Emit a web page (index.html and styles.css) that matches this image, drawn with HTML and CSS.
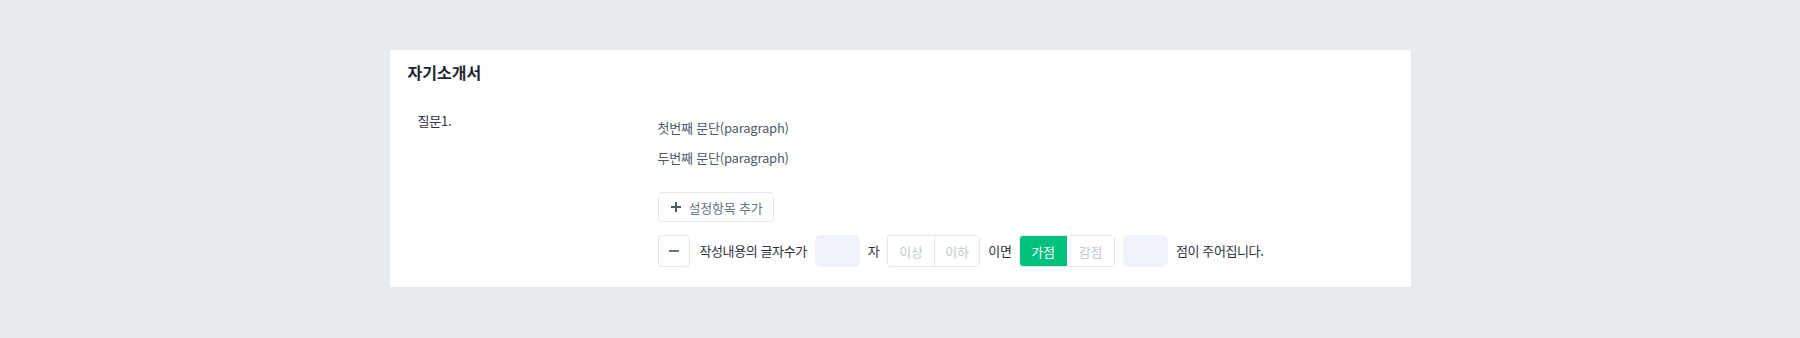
FILE: index.html
```html
<!DOCTYPE html>
<html lang="ko">
<head>
    <meta charset="UTF-8">
    <meta name="viewport" content="width=device-width, initial-scale=1.0">
    <title>자기소개서</title>
    <link rel="stylesheet" href="styles.css">
</head>
<body>
    <div class="card">
        <h2 class="card-title">자기소개서</h2>
        <div class="question">
            <div class="question-label">질문1.</div>
            <div class="question-body">
                <p class="para">첫번째 문단(paragraph)</p>
                <p class="para">두번째 문단(paragraph)</p>

                <button type="button" class="btn-add">
                    <span class="icon-plus"></span>
                    설정항목 추가
                </button>

                <div class="rule">
                    <button type="button" class="btn-remove"><span class="icon-minus"></span></button>
                    <span class="rule-text">작성내용의 글자수가</span>
                    <input type="text" class="rule-input">
                    <span class="rule-text">자</span>
                    <div class="segment">
                        <button type="button">이상</button>
                        <button type="button">이하</button>
                    </div>
                    <span class="rule-text">이면</span>
                    <div class="segment">
                        <button type="button" class="active">가점</button>
                        <button type="button">감점</button>
                    </div>
                    <input type="text" class="rule-input">
                    <span class="rule-text">점이 주어집니다.</span>
                </div>
            </div>
        </div>
    </div>
</body>
</html>
```

FILE: styles.css
```css
:root {
    --bg-color: #e8ebee;
    --border-color: #e2e6ed;
    --input-color: #eff2f9;
    --green: #00c27c;
    --text-color: #1e2630;
    --muted-color: #4e5968;
}

body {
    margin: 0;
    background: var(--bg-color);
    font-family: "Noto Sans CJK KR", "Noto Sans", sans-serif;
    color: var(--text-color);
    font-size: 13px;
    letter-spacing: -0.2px;
}

.card {
    width: 1021px;
    margin: 50px auto 0;
    padding: 10px 0 20px;
    background: #fff;
    box-sizing: border-box;
}

.card-title {
    margin: 0;
    padding: 0 18px;
    font-size: 16px;
    line-height: 24px;
    font-weight: 700;
    letter-spacing: 0;
}

.question {
    display: flex;
    margin-top: 22px;
    padding-left: 28px;
}

.question-label {
    width: 240px;
    line-height: 30px;
    color: #2b323b;
}

.question-body {
    padding-top: 7px;
}

.para {
    margin: 0;
    line-height: 30px;
    color: var(--muted-color);
}

.btn-add {
    display: flex;
    align-items: center;
    gap: 8px;
    height: 30px;
    margin-top: 19px;
    padding: 0 10px 0 12px;
    background: #fff;
    border: 1.5px solid var(--border-color);
    border-radius: 4px;
    font-family: inherit;
    font-size: 13px;
    letter-spacing: -0.2px;
    color: #6b7684;
}

.icon-plus {
    position: relative;
    width: 10px;
    height: 10px;
}

.icon-plus::before,
.icon-plus::after {
    content: "";
    position: absolute;
    background: #4e5968;
}

.icon-plus::before {
    left: 0;
    top: 4px;
    width: 10px;
    height: 2px;
}

.icon-plus::after {
    left: 4px;
    top: 0;
    width: 2px;
    height: 10px;
}

.rule {
    display: flex;
    align-items: center;
    gap: 8px;
    margin-top: 13px;
}

.btn-remove {
    display: flex;
    align-items: center;
    justify-content: center;
    width: 32px;
    height: 32px;
    padding: 0;
    margin-right: 2px;
    background: #fff;
    border: 1.5px solid var(--border-color);
    border-radius: 4px;
}

.icon-minus {
    width: 10px;
    height: 2px;
    background: #6b7684;
}

.rule-text {
    color: #2b323b;
    line-height: 32px;
    letter-spacing: -0.4px;
}

.rule-input {
    width: 45px;
    height: 32px;
    box-sizing: border-box;
    border: none;
    border-radius: 6px;
    background: var(--input-color);
}

.segment {
    display: flex;
    height: 32px;
    box-sizing: border-box;
    border: 1.5px solid var(--border-color);
    border-radius: 4px;
    overflow: hidden;
}

.segment button {
    width: 45.5px;
    padding: 0;
    border: none;
    background: #fff;
    font-family: inherit;
    font-size: 13px;
    letter-spacing: -0.2px;
    color: #c3c8d0;
}

.segment button + button {
    border-left: 1.5px solid var(--border-color);
}

.segment button.active {
    width: 48px;
    margin: -1.5px 0 -1.5px -1.5px;
    background: var(--green);
    color: #fff;
}

.segment button.active + button {
    width: 47px;
    border-left: none;
}
```
